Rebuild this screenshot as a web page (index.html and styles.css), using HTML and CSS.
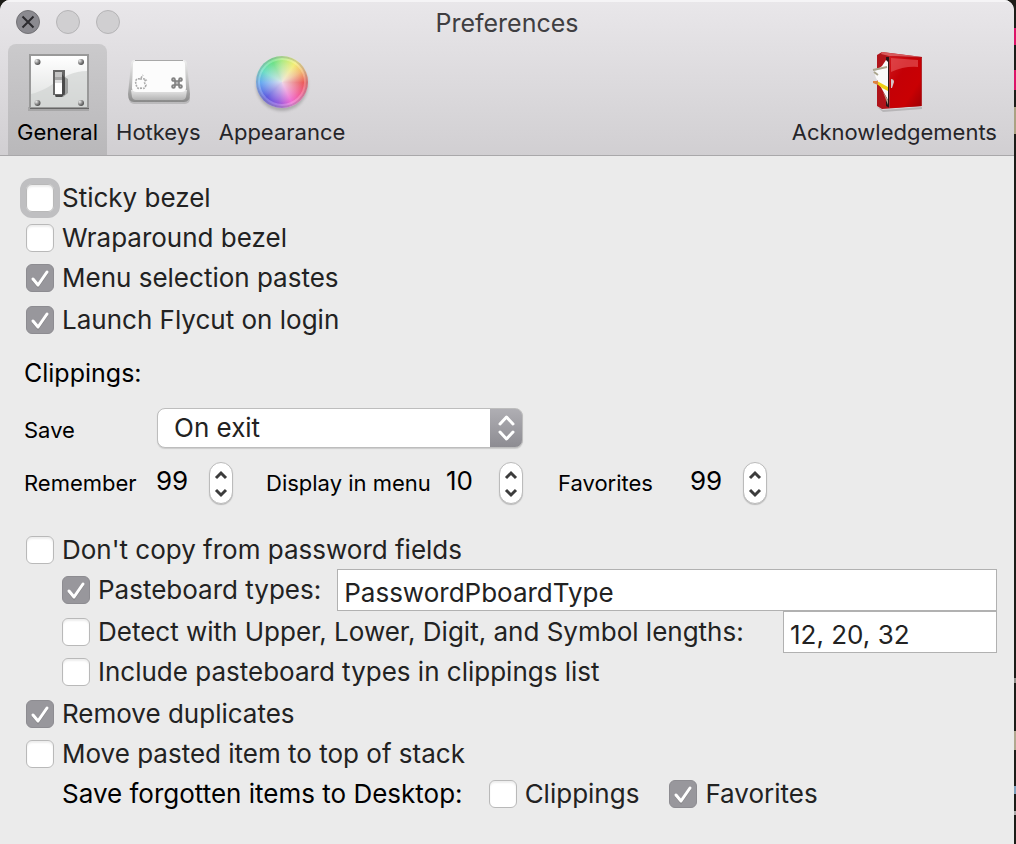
FILE: index.html
```html
<!DOCTYPE html>
<html lang="en">
<head>
    <meta charset="UTF-8">
    <meta name="viewport" content="width=device-width, initial-scale=1.0">
    <title>Preferences</title>
    <link rel="stylesheet" href="styles.css">
</head>
<body>
    <div class="window">
        <header class="titlebar">
            <div class="title-row">
                <div class="lights">
                    <button class="light close" aria-label="Close">
                        <svg width="24" height="24" viewBox="0 0 24 24"><path d="M6.500 6.500l11 11M17.500 6.500l-11 11" stroke="#2c2b2f" stroke-width="2"/></svg>
                    </button>
                    <button class="light" aria-label="Minimize"></button>
                    <button class="light" aria-label="Zoom"></button>
                </div>
                <h1>Preferences</h1>
            </div>
            <nav class="toolbar">
                <button class="tab active">
                    <svg width="64" height="64" viewBox="0 0 64 64">
                        <defs>
                            <linearGradient id="plate" x1="0" y1="0" x2="0" y2="1">
                                <stop offset="0" stop-color="#fff"/><stop offset="1" stop-color="#dcdedd"/>
                            </linearGradient>
                            <radialGradient id="screw" cx=".3" cy=".3" r=".7">
                                <stop offset="0" stop-color="#eee"/><stop offset=".6" stop-color="#888"/><stop offset="1" stop-color="#555"/>
                            </radialGradient>
                        </defs>
                        <path d="M2 57h61v4H2z" fill="#777" opacity=".35"/>
                        <rect x="4" y="5" width="59" height="54" fill="#666"/>
                        <rect x="3" y="4" width="60" height="54" fill="#999"/>
                        <rect x="5" y="6" width="56" height="51" fill="url(#plate)"/>
                        <path d="M61 21v36H5V44C28 39 34 22 61 21z" fill="#cfd3d1" opacity=".65"/>
                        <g fill="url(#screw)">
                            <circle cx="11.500" cy="12" r="3"/><circle cx="55" cy="12" r="3"/>
                            <circle cx="11.500" cy="53" r="3"/><circle cx="55" cy="53" r="3"/>
                        </g>
                        <path d="M34 24l8 5v14l-5 4h-8z" fill="#333" opacity=".35"/>
                        <rect x="27" y="20" width="12" height="25" fill="#666"/>
                        <path d="M29 22h7v11h-7z" fill="#a5a5a5"/>
                        <path d="M29 22h7v5h-7z" fill="#c4c4c4"/>
                        <path d="M29 30h7v3h-7z" fill="#ddd"/>
                        <path d="M29 33h7v11h-7z" fill="#fff"/>
                        <path d="M36 24l3 4v15l-3 4h-6l-1-2h7z" fill="#4a4a4a"/>
                    </svg>
                    <span>General</span>
                </button>
                <button class="tab">
                    <svg width="64" height="64" viewBox="0 0 64 64">
                        <defs>
                            <linearGradient id="keySide" x1="0" y1="0" x2="0" y2="1">
                                <stop offset="0" stop-color="#eee"/><stop offset=".6" stop-color="#b5b5b5"/><stop offset="1" stop-color="#8a8a8a"/>
                            </linearGradient>
                            <linearGradient id="keyFront" x1="0" y1="0" x2="0" y2="1">
                                <stop offset="0" stop-color="#e8e8e8"/><stop offset="1" stop-color="#b4b4b4"/>
                            </linearGradient>
                        </defs>
                        <rect x="3" y="44" width="61" height="10" rx="5" fill="#777" opacity=".3"/>
                        <path d="M9 10h48q4 0 4 4l3 30q0 8-6 8H8q-6 0-6-8l3-30q0-4 4-4z" fill="url(#keySide)"/>
                        <path d="M5 40h56l-1 7q-1 3-4 3H10q-3 0-4-3z" fill="url(#keyFront)"/>
                        <path d="M10 11h46q3 0 3 3l1 24q0 4-5 4H11q-5 0-5-4l1-24q0-3 3-3z" fill="#fcfcfc"/>
                        <path d="M9 10.500h48" stroke="#a8a8a8"/>
                        <path d="M14 29c-4-1-5 2-4 5 1 5 3 5 5 4 3 1 4 0 5-3-2-2-2-4 0-5-2-2-4-1-6-1zM15 28l2-3" fill="none" stroke="#aaa" stroke-width="1.600" stroke-dasharray="2 1"/>
                        <path d="M49 31h4v4h-4zM49 31v-1.500a1.500 1.500 0 1 0-1.500 1.500zM53 31h1.500a1.500 1.500 0 1 0-1.500-1.500zM53 35v1.500a1.500 1.500 0 1 0 1.500-1.500zM49 35h-1.500a1.500 1.500 0 1 0 1.500 1.500z" fill="#b5b5b5" stroke="#808080" stroke-width="1.600"/>
                    </svg>
                    <span>Hotkeys</span>
                </button>
                <button class="tab">
                    <span class="wheel-box"><span class="wheel"></span></span>
                    <span>Appearance</span>
                </button>
                <button class="tab tab-end">
                    <svg width="64" height="64" viewBox="0 0 64 64">
                        <defs>
                            <linearGradient id="door" x1="0" y1="0" x2="1" y2="1">
                                <stop offset="0" stop-color="#d0181e"/><stop offset=".35" stop-color="#c40006"/><stop offset=".7" stop-color="#c90003"/><stop offset="1" stop-color="#9b0005"/>
                            </linearGradient>
                        </defs>
                        <path d="M15 57l6 3 39-3v2l-39 3z" fill="#555" opacity=".25"/>
                        <path d="M15 5l5-3 40 5v49l-40 3-5-3z" fill="#b0141b"/>
                        <path d="M20 2l40 5-33-1-8-2z" fill="#d8585b"/>
                        <path d="M24 7h4v51l-4-2z" fill="#2a1518"/>
                        <path d="M24 10l2 2v38l-5-9-7-13-2-6 8-6z" fill="#fafafa"/>
                        <path d="M11 20l14-3M12 22l4 3" stroke="#aaa58e" stroke-width="2" fill="none"/>
                        <path d="M15 31l11 6v4l-6-3-5-4z" fill="#efce16"/>
                        <path d="M11 31l5 0v4l-5-2z" fill="#dd8240"/>
                        <path d="M21 42l5 8v5z" fill="#b9a08c"/>
                        <path d="M27 6l33 2v48l-33 2z" fill="url(#door)"/>
                        <path d="M27.500 6v52M59.500 8v48" stroke="#b02a2e"/>
                        <path d="M29 8l27 2v7q-14-1-27 5z" fill="#ed6b6e" opacity=".5"/>
                        <path d="M29 29q3 0 3 3l-2 6h-1z" fill="#d5c3c5"/>
                    </svg>
                    <span>Acknowledgements</span>
                </button>
            </nav>
        </header>

        <main class="content">
            <label class="row"><input type="checkbox" class="focused">Sticky bezel</label>
            <label class="row"><input type="checkbox">Wraparound bezel</label>
            <label class="row"><input type="checkbox" checked>Menu selection pastes</label>
            <label class="row spaced"><input type="checkbox" checked>Launch Flycut on login</label>

            <h2>Clippings:</h2>

            <div class="save-row">
                <label class="small" for="save">Save</label>
                <select id="save">
                    <option>On exit</option>
                    <option>Never</option>
                    <option>After each clip</option>
                </select>
            </div>

            <div class="counts">
                <div class="count remember">
                    <span class="small">Remember</span>
                    <output>99</output>
                    <div class="stepper">
                        <button aria-label="Remember more"><svg width="22" height="20" viewBox="0 0 22 20"><path d="M6 15l5-5 5 5"/></svg></button>
                        <button aria-label="Remember fewer"><svg width="22" height="20" viewBox="0 0 22 20"><path d="M6 7l5 5 5-5"/></svg></button>
                    </div>
                </div>
                <div class="count display">
                    <span class="small">Display in menu</span>
                    <output>10</output>
                    <div class="stepper">
                        <button aria-label="Display more"><svg width="22" height="20" viewBox="0 0 22 20"><path d="M6 15l5-5 5 5"/></svg></button>
                        <button aria-label="Display fewer"><svg width="22" height="20" viewBox="0 0 22 20"><path d="M6 7l5 5 5-5"/></svg></button>
                    </div>
                </div>
                <div class="count favorites">
                    <span class="small">Favorites</span>
                    <output>99</output>
                    <div class="stepper">
                        <button aria-label="More favorites"><svg width="22" height="20" viewBox="0 0 22 20"><path d="M6 15l5-5 5 5"/></svg></button>
                        <button aria-label="Fewer favorites"><svg width="22" height="20" viewBox="0 0 22 20"><path d="M6 7l5 5 5-5"/></svg></button>
                    </div>
                </div>
            </div>

            <label class="row"><input type="checkbox">Don't copy from password fields</label>
            <div class="row indent">
                <label class="check"><input type="checkbox" checked>Pasteboard types:</label>
                <input type="text" class="types" aria-label="Pasteboard types" value="PasswordPboardType">
            </div>
            <div class="row indent spaced">
                <label class="check"><input type="checkbox">Detect with Upper, Lower, Digit, and Symbol lengths:</label>
                <input type="text" class="lengths" aria-label="Lengths" value="12, 20, 32">
            </div>
            <label class="row indent"><input type="checkbox">Include pasteboard types in clippings list</label>
            <label class="row spaced"><input type="checkbox" checked>Remove duplicates</label>
            <label class="row"><input type="checkbox">Move pasted item to top of stack</label>
            <div class="row indent forgotten">
                <span>Save forgotten items to Desktop:</span>
                <label class="check"><input type="checkbox">Clippings</label>
                <label class="check"><input type="checkbox" checked>Favorites</label>
            </div>
        </main>
    </div>
</body>
</html>
```

FILE: styles.css
```css
* {
    box-sizing: border-box;
}
body {
    margin: 0;
    padding-right: 2px;
    min-height: 100vh;
    display: flex;
    font-family: Inter, Roboto, sans-serif;
    font-size: 26px;
    line-height: 30px;
    color: #222;
    background: linear-gradient(#1c1c18 28px, #dc1468 28px, #dc1468 45px, #1c1c18 45px, #1c1c18 70px, #dc1468 70px, #dc1468 90px, #1c1c18 90px, #1c1c18 107px, #aaa283 107px, #aaa283 134px, #1c1c18 134px, #1c1c18 678px, #8e8e88 678px, #8e8e88 683px, #1c1c18 683px, #1c1c18 731px, #b0a890 731px, #b0a890 750px, #1c1c18 750px, #1c1c18 786px, #7da0ba 786px, #7da0ba 794px, #1c1c18 794px, #1c1c18 811px, #aaa 811px, #aaa 815px, #1c1c18 815px);
}
button, input, select {
    font: inherit;
    color: inherit;
    margin: 0;
}
button {
    border: none;
    padding: 0;
    background: none;
}
svg {
    display: block;
}
.window {
    flex: 1;
    background: #ebebeb;
    border-radius: 10px 10px 0 0;
    overflow: hidden;
}

/* title bar and toolbar */
.titlebar {
    background: linear-gradient(#e9e7ea, #d1cfd2);
    border-bottom: 1px solid #a9a8aa;
    box-shadow: inset 0 2px 0 #f5f4f6;
}
.title-row {
    display: grid;
    grid-template-columns: 1fr auto 1fr;
    align-items: center;
    height: 44px;
    padding: 0 16px;
}
.lights {
    display: flex;
    gap: 16px;
}
.light {
    width: 24px;
    height: 24px;
    border: 1px solid #b5b4b6;
    border-radius: 50%;
    background: #d0cfd1;
}
.close {
    background: #8b8a90;
    border-color: #737276;
}
.close svg {
    margin: -1px;
}
h1 {
    margin: 0;
    padding-top: 2px;
    font-size: 25px;
    font-weight: normal;
    color: #3f3e41;
}
.toolbar {
    display: flex;
    padding: 0 8px;
}
.tab {
    display: flex;
    flex-direction: column;
    align-items: center;
    height: 111px;
    padding: 6px 9px 0;
    font-size: 22px;
    color: #262529;
}
.tab span {
    line-height: 36px;
}
.active {
    background: linear-gradient(#cbcacc, #b9b8ba);
    border-radius: 8px 8px 0 0;
    color: #000;
}
.tab-end {
    margin-left: auto;
}
.tab .wheel-box {
    display: flex;
    width: 64px;
    height: 64px;
    padding: 6px;
}
.wheel {
    width: 52px;
    height: 52px;
    border-radius: 50%;
    background:
        radial-gradient(circle, rgba(238, 230, 238, 0.9), rgba(240, 235, 245, 0.25) 45%, transparent 62%),
        conic-gradient(#a8ea7c, #f4ee6c 35deg, #f3b468 62deg, #ea5050 92deg, #f2568f 125deg, #ee62d0 155deg, #8a50dc 190deg, #5450dc 225deg, #5ea4f0 268deg, #60dcc0 300deg, #62e080 335deg, #a8ea7c);
    box-shadow: inset 0 0 0 2px rgba(70, 70, 90, 0.2), inset 0 0 0 4px rgba(255, 255, 255, 0.25), 0 3px 3px rgba(0, 0, 0, 0.2);
}

/* settings */
.content {
    padding: 22px 17px 24px 24px;
}
.row {
    display: flex;
    align-items: center;
    height: 40px;
}
.spaced {
    margin-top: 2px;
}
.indent {
    padding-left: 36px;
}
.check {
    display: flex;
    align-items: center;
    white-space: nowrap;
}
input[type="checkbox"] {
    appearance: none;
    flex: none;
    width: 28px;
    height: 28px;
    margin: 0 8px 0 2px;
    border: 1px solid #b9b9b9;
    border-radius: 6px;
    background: #fff;
    box-shadow: inset 0 2px 2px #eee;
}
input[type="checkbox"]:checked {
    border-color: #8d8c91;
    background: #98979c url("data:image/svg+xml,%3Csvg xmlns='http://www.w3.org/2000/svg' viewBox='0 0 26 26'%3E%3Cpath d='M6 15l5 6 9-13' fill='none' stroke='%23777' stroke-width='3' opacity='.5'/%3E%3Cpath d='M6 14l5 6 9-13' fill='none' stroke='white' stroke-width='3' stroke-linecap='round' stroke-linejoin='round'/%3E%3C/svg%3E");
    box-shadow: none;
}
input[type="checkbox"].focused {
    outline: 6px solid #bfbfc1;
}
h2 {
    margin: 18px 0 20px;
    font-size: 25px;
    font-weight: normal;
    color: #000;
}
.small {
    font-size: 22px;
    color: #000;
}
.save-row {
    display: grid;
    grid-template-columns: 133px 366px;
    align-items: center;
}
.save-row label {
    padding-top: 4px;
}
select {
    appearance: none;
    height: 40px;
    padding: 0 48px 0 16px;
    border: 1px solid #bdbdbd;
    border-radius: 8px;
    background:
        url("data:image/svg+xml,%3Csvg xmlns='http://www.w3.org/2000/svg' viewBox='0 0 33 40'%3E%3Cpath d='M10 16l6.500-7 6.500 7M10 24l6.500 7 6.500-7' fill='none' stroke='white' stroke-width='3' stroke-linecap='round' stroke-linejoin='round'/%3E%3C/svg%3E") right / 33px 40px no-repeat border-box,
        linear-gradient(#b0afb4, #8c8b91) right / 33px 40px no-repeat border-box,
        #fff;
    box-shadow: 0 1px 1px #ccc;
}
.counts {
    display: flex;
    align-items: center;
    margin: 14px 0 26px;
    color: #000;
}
.count {
    display: grid;
    align-items: center;
    white-space: nowrap;
}
.count output {
    padding-bottom: 4px;
}
.remember {
    grid-template-columns: 132px 53px 24px;
    margin-right: 33px;
}
.display {
    grid-template-columns: 180px 53px 24px;
    margin-right: 35px;
}
.favorites {
    grid-template-columns: 132px 53px 24px;
}
.stepper {
    height: 42px;
    border: 1px solid #bbb;
    border-radius: 12px;
    background: #fff;
    box-shadow: 0 1px 1px #bbb;
}
.stepper button {
    display: block;
}
.stepper path {
    fill: none;
    stroke: #3c3c3c;
    stroke-width: 3;
}
input[type="text"] {
    min-width: 0;
    height: 42px;
    padding: 4px 6px 0;
    border: 1px solid #b1b1b1;
    background: #fff;
}
.types {
    flex: 1;
    margin-left: 16px;
}
.lengths {
    width: 214px;
    margin-left: auto;
}
.forgotten span {
    margin-left: 2px;
    margin-right: 24px;
    color: #000;
}
.forgotten .check {
    margin-right: 28px;
}
```
